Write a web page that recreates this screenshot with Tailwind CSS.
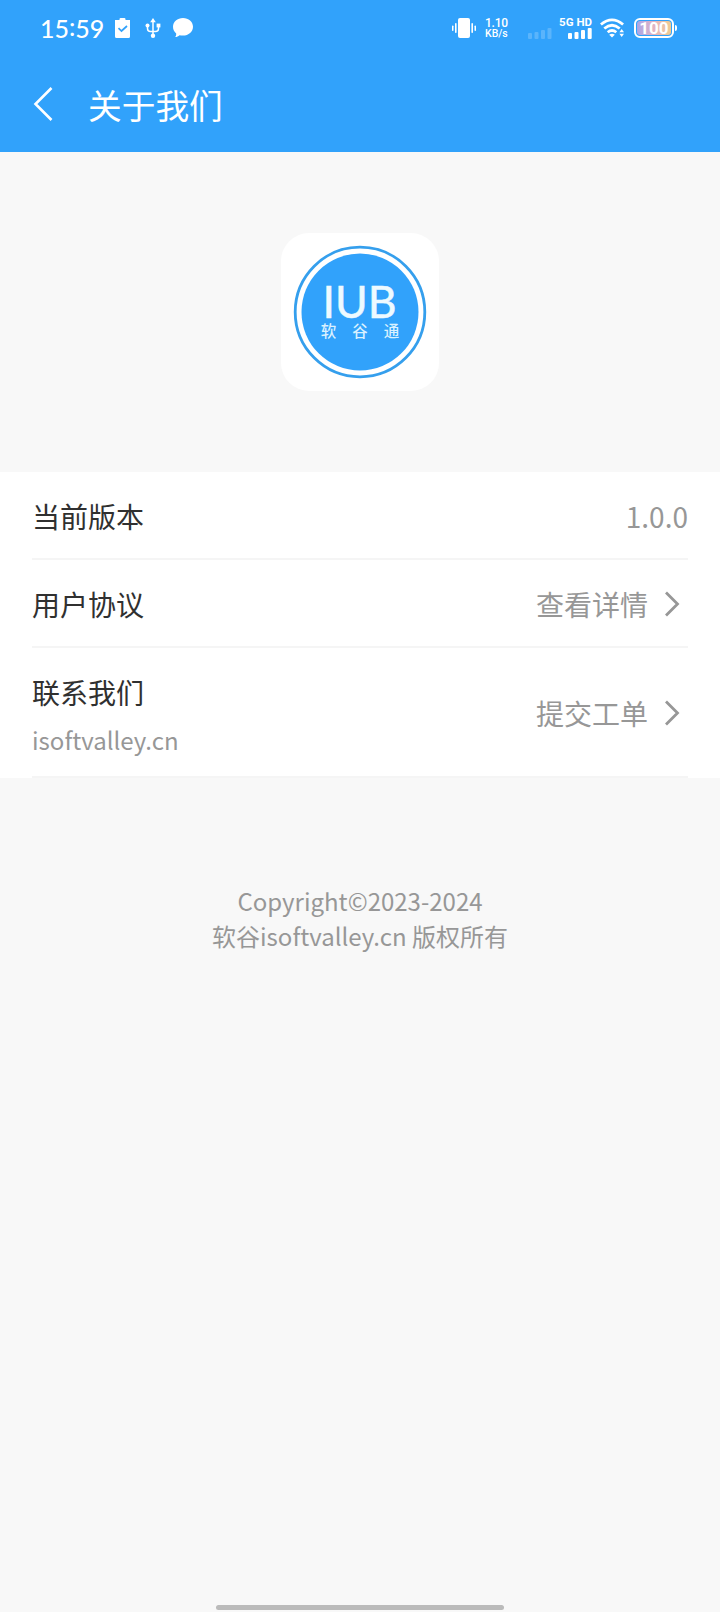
<!DOCTYPE html>
<html lang="zh-CN">

<head>
  <meta charset="UTF-8" />
  <meta name="viewport" content="width=device-width, initial-scale=1.0" />
  <title>关于我们</title>
  <script src="https://cdn.jsdelivr.net/npm/@tailwindcss/browser@4"></script>
  <style>
    body {
      font-family: "Noto Sans CJK SC", sans-serif;
    }
  </style>
</head>

<body class="bg-[#f8f8f8]">
  <div class="w-[720px] h-[1612px] flex flex-col overflow-hidden">
    <header class="h-[152px] shrink-0 bg-[#31a2fb] text-white">
      <!-- status bar -->
      <div class="h-14 pl-10 pr-[43px] flex justify-between items-center font-[Roboto,sans-serif]">
        <div class="flex items-center">
          <p class="w-[75px] pt-px flex text-[25px] leading-none font-medium font-[Lato,sans-serif]">15<span class="-mt-[2px]">:</span>59</p>
          <svg class="w-[15px] h-5" viewBox="0 0 15 20">
            <path d="M0 2H4.500V1.200Q4.500 0 5.700 0H9.300Q10.500 0 10.500 1.200V2H15V18.500Q15 20 13.500 20H1.500Q0 20 0 18.500Z" fill="#fff" />
            <path d="M3.500 10.200L6.500 13L12 8" fill="none" stroke="#31a2fb" stroke-width="1.700" />
          </svg>
          <svg class="w-4 h-5 ml-[15px]" viewBox="0 0 16 20" fill="none" stroke="#fff" stroke-width="1.500">
            <path d="M8 3V17M2.500 8V10.500Q2.500 13.500 5.500 13.500H10.500Q13.500 13.500 13.500 10.500V8" />
            <path d="M8 0L10.800 4.300H5.200Z" fill="#fff" stroke="none" />
            <circle cx="8" cy="17.800" r="2.200" fill="#fff" stroke="none" />
            <circle cx="2.500" cy="7.500" r="2" fill="#fff" stroke="none" />
            <rect x="11.600" y="5.600" width="3.800" height="3.800" fill="#fff" stroke="none" />
          </svg>
          <svg class="w-5 h-5 ml-3" viewBox="0 0 20 20" fill="#fff">
            <path d="M10 0C15.600 0 20 3.800 20 8.800C20 13.800 15.600 17.600 10 17.600C8.600 17.600 7.600 17.500 6.500 17.200C5.300 18.300 4 19 2.200 19C3 18 3.300 17 3.200 15.500C1.200 13.800 0 11.500 0 8.800C0 3.800 4.400 0 10 0Z" />
          </svg>
        </div>
        <div class="flex items-center">
          <svg class="w-6 h-5" viewBox="0 0 24 20" fill="#fff">
            <rect x="6" width="12" height="20" rx="2" />
            <rect x="3" y="5" width="1.600" height="10" rx=".8" />
            <rect x="0" y="7.500" width="1.500" height="5.500" rx=".7" />
            <rect x="19.400" y="5" width="1.600" height="10" rx=".8" />
            <rect x="22.500" y="7.500" width="1.500" height="5.500" rx=".7" />
          </svg>
          <div class="w-[43px] ml-[9px] font-medium">
            <p class="text-[12px] leading-[11px] tracking-[-0.2px]">1.10</p>
            <p class="text-[10.500px] leading-[10px]">KB/s</p>
          </div>
          <svg class="w-6 h-[11px] mt-[11px]" viewBox="0 0 24 11" fill="#fff" fill-opacity=".2">
            <rect y="5" width="4" height="6" rx="1" />
            <rect x="6.500" y="4" width="4" height="7" rx="1" />
            <rect x="13" y="2" width="4" height="9" rx="1" />
            <rect x="19.500" width="4" height="11" rx="1" />
          </svg>
          <div class="w-8 ml-2 flex flex-col items-end">
            <p class="text-[11.500px] leading-[11px] font-bold whitespace-nowrap">5G HD</p>
            <svg class="w-6 h-[11px]" viewBox="0 0 24 11" fill="#fff">
              <rect y="5" width="4" height="6" rx="1" />
              <rect x="6.500" y="4" width="4" height="7" rx="1" />
              <rect x="13" y="2" width="4" height="9" rx="1" />
              <rect x="19.700" width="4" height="11" rx="1" />
            </svg>
          </div>
          <svg class="w-[25px] h-5 ml-2" viewBox="0 0 25 20" fill="none" stroke="#fff" stroke-width="2.800">
            <path d="M.9 6.500Q12 -2.800 23.100 6.500M4.300 10.500Q12 4 19.700 10.500M7.700 14.300Q12 10.700 16.300 14.300" />
            <path d="M12 19.500L9.200 16.700Q12 14.700 14.800 16.700Z" fill="#fff" stroke="none" />
            <path d="M21.700 11L24 14.300H19.400ZM21.700 19L19.400 15.800H24Z" fill="#fff" stroke="none" />
          </svg>
          <!-- battery -->
          <div class="w-10 h-5 ml-[9px] p-px rounded-[6px] border-2 border-white">
            <p class="h-full rounded-[3px] bg-linear-to-r from-[#a9a5e8] via-[#e3b3c0] to-[#f0cc90] flex items-center justify-center text-[17px] leading-none font-bold">100</p>
          </div>
          <div class="w-[2px] h-[6px] ml-px rounded-r bg-white"></div>
        </div>
      </div>
      <div class="h-24 pl-[33px] flex items-center">
        <svg class="w-5 h-[34px]" viewBox="0 0 20 34" fill="none" stroke="#fff" stroke-width="2.600">
          <path d="M18.500 1L2.500 17L18.500 33" />
        </svg>
        <h1 class="ml-[35px] pt-px text-[33.700px] leading-none">关于我们</h1>
      </div>
    </header>

    <section class="h-80 shrink-0 flex justify-center items-center">
      <div class="w-[158px] h-[158px] rounded-[28px] bg-white flex justify-center items-center">
        <svg class="w-[134px] h-[134px]" viewBox="0 0 134 134">
          <circle cx="67" cy="67" r="64.800" fill="#fff" stroke="#359fed" stroke-width="2.800" />
          <circle cx="67" cy="67" r="58.500" fill="#31a2fb" />
          <text x="66.500" y="72.500" text-anchor="middle" textLength="74" lengthAdjust="spacingAndGlyphs" font-family="Lato, sans-serif" font-size="44" fill="#eefaff" stroke="#eefaff" stroke-width=".5">IUB</text>
          <g font-size="15.500" font-weight="500" fill="#d9f1ff" text-anchor="middle">
            <text x="35.500" y="92">软</text>
            <text x="67" y="92">谷</text>
            <text x="98.500" y="92">通</text>
          </g>
        </svg>
      </div>
    </section>

    <section class="shrink-0 px-8 bg-white text-[28px] leading-none text-[#303030]">
      <div class="h-[88px] pt-[2px] flex justify-between items-center border-b-2 border-[#f5f5f5]">
        <p>当前版本</p>
        <p class="text-[#979797]">1.0.0</p>
      </div>
      <div class="h-[88px] pt-[2px] flex justify-between items-center border-b-2 border-[#f5f5f5]">
        <p>用户协议</p>
        <div class="flex items-center text-[#979797]">
          <p>查看详情</p>
          <svg class="w-4 h-[26px] ml-4 mr-2" viewBox="0 0 16 26" fill="none" stroke="#979797" stroke-width="2.800">
            <path d="M2 1.500L13.500 13L2 24.500" />
          </svg>
        </div>
      </div>
      <div class="h-[130px] pt-[2px] flex justify-between items-center border-b-2 border-[#f5f5f5]">
        <div class="pt-[6px]">
          <p>联系我们</p>
          <p class="mt-5 text-2xl leading-7 text-[#979797]">isoftvalley.cn</p>
        </div>
        <div class="flex items-center text-[#979797]">
          <p>提交工单</p>
          <svg class="w-4 h-[26px] ml-4 mr-2" viewBox="0 0 16 26" fill="none" stroke="#979797" stroke-width="2.800">
            <path d="M2 1.500L13.500 13L2 24.500" />
          </svg>
        </div>
      </div>
    </section>

    <footer class="grow pt-[105px] pb-[2px] flex flex-col justify-between items-center text-2xl leading-[35px] text-center text-[#979797]">
      <div>
        <p>Copyright©2023-2024</p>
        <p>软谷isoftvalley.cn 版权所有</p>
      </div>
      <div class="w-72 h-[5px] rounded-full bg-[#bbbbbb]"></div>
    </footer>
  </div>
</body>

</html>
